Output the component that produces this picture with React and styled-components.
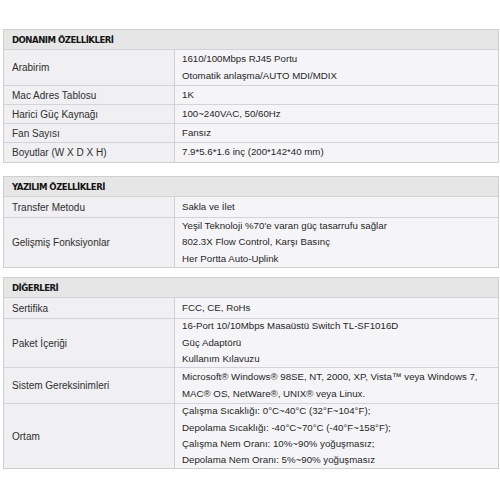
import React from "react";
import styled, { createGlobalStyle } from "styled-components";

const GlobalStyle = createGlobalStyle`
  html, body {
    margin: 0;
    padding: 0;
    background: #ffffff;
  }
  body {
    font-family: "Liberation Sans", Arial, sans-serif;
    color: #333333;
  }
`;

const Page = styled.div`
  width: 500px;
  height: 500px;
  padding: 29px 1px 0 3px;
  box-sizing: border-box;
  display: flex;
  flex-direction: column;
`;

const SpecTable = styled.section`
  border: 1px solid #cfcfcf;
  margin-bottom: ${(p) => p.$gap}px;
  display: grid;
  grid-template-columns: 171px 1fr;
`;

const Heading = styled.div`
  grid-column: 1 / -1;
  box-sizing: border-box;
  height: 20px;
  display: flex;
  align-items: center;
  padding-left: 8px;
  background: #e6e6e6;
  border-bottom: 1px solid #d2d2d2;
  font-family: "Liberation Sans Narrow", "DejaVu Sans Condensed", sans-serif;
  font-weight: bold;
  font-size: 9.5px;
  letter-spacing: -0.5px;
  color: #141414;
`;

const Label = styled.div`
  box-sizing: border-box;
  display: flex;
  align-items: center;
  padding-left: 8px;
  height: ${(p) => p.$h}px;
  background: #f0f0f2;
  border-right: 1px solid #d0d0d0;
  border-top: ${(p) => (p.$first ? "none" : "1px solid #d4d4d8")};
  font-size: 10px;
  color: #2e2e2e;
`;

const Value = styled.div`
  box-sizing: border-box;
  display: flex;
  flex-direction: column;
  justify-content: center;
  padding-left: 7px;
  height: ${(p) => p.$h}px;
  background: #f5f5f8;
  border-top: ${(p) => (p.$first ? "none" : "1px solid #d4d4d8")};
  font-size: 9.7px;
  line-height: 16.4px;
  color: #262626;
  white-space: nowrap;
`;

const tables = [
  {
    title: "DONANIM ÖZELLİKLERİ",
    gap: 13,
    rows: [
      { label: "Arabirim", h: 35, lines: ["1610/100Mbps RJ45 Portu", "Otomatik anlaşma/AUTO MDI/MDIX"] },
      { label: "Mac Adres Tablosu", h: 19, lines: ["1K"] },
      { label: "Harici Güç Kaynağı", h: 19, lines: ["100~240VAC, 50/60Hz"] },
      { label: "Fan Sayısı", h: 19, lines: ["Fansız"] },
      { label: "Boyutlar (W X D X H)", h: 20, lines: ["7.9*5.6*1.6 inç (200*142*40 mm)"] },
    ],
  },
  {
    title: "YAZILIM ÖZELLİKLERİ",
    gap: 9,
    rows: [
      { label: "Transfer Metodu", h: 20, lines: ["Sakla ve İlet"] },
      {
        label: "Gelişmiş Fonksiyonlar",
        h: 50,
        lines: [
          "Yeşil Teknoloji %70'e varan güç tasarrufu sağlar",
          "802.3X Flow Control, Karşı Basınç",
          "Her Portta Auto-Uplink",
        ],
      },
    ],
  },
  {
    title: "DİĞERLERİ",
    gap: 0,
    rows: [
      { label: "Sertifika", h: 20, lines: ["FCC, CE, RoHs"] },
      {
        label: "Paket İçeriği",
        h: 49,
        lines: ["16-Port 10/10Mbps Masaüstü Switch TL-SF1016D", "Güç Adaptörü", "Kullanım Kılavuzu"],
      },
      {
        label: "Sistem Gereksinimleri",
        h: 36,
        lines: [
          "Microsoft® Windows® 98SE, NT, 2000, XP, Vista™ veya Windows 7,",
          "MAC® OS, NetWare®, UNIX® veya Linux.",
        ],
      },
      {
        label: "Ortam",
        h: 65,
        lines: [
          "Çalışma Sıcaklığı: 0°C~40°C (32°F~104°F);",
          "Depolama Sıcaklığı: -40°C~70°C (-40°F~158°F);",
          "Çalışma Nem Oranı: 10%~90% yoğuşmasız;",
          "Depolama Nem Oranı: 5%~90% yoğuşmasız",
        ],
      },
    ],
  },
];

export default function App() {
  return (
    <>
      <GlobalStyle />
      <Page>
        {tables.map((t) => (
          <SpecTable key={t.title} $gap={t.gap}>
            <Heading>{t.title}</Heading>
            {t.rows.map((r, i) => (
              <React.Fragment key={r.label}>
                <Label $h={r.h} $first={i === 0}>
                  {r.label}
                </Label>
                <Value $h={r.h} $first={i === 0}>
                  {r.lines.map((l) => (
                    <span key={l}>{l}</span>
                  ))}
                </Value>
              </React.Fragment>
            ))}
          </SpecTable>
        ))}
      </Page>
    </>
  );
}
